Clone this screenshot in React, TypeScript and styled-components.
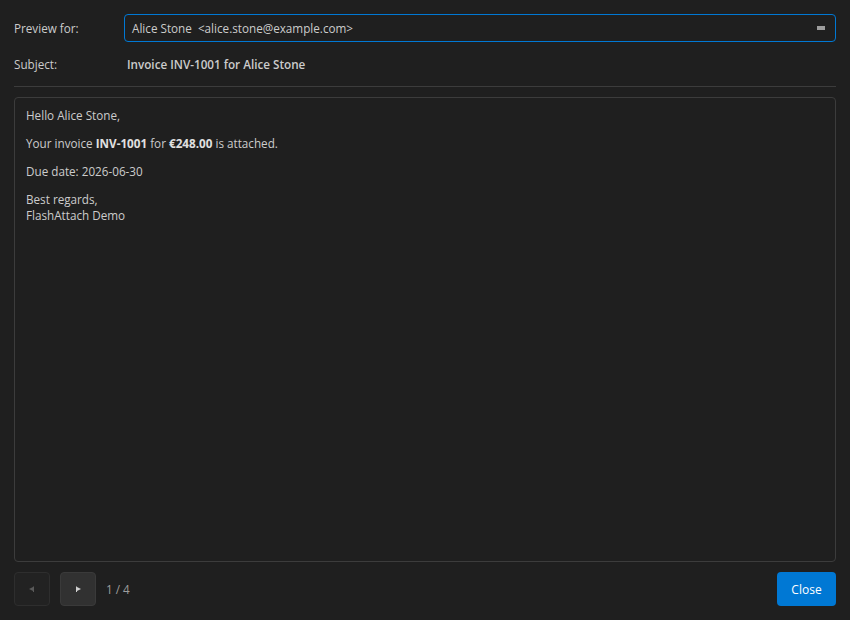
import styled, { createGlobalStyle } from "styled-components";

const GlobalStyle = createGlobalStyle`
  html, body {
    margin: 0;
    padding: 0;
    background: #1f1f1f;
  }
  body {
    font-family: "Open Sans", "Noto Sans", sans-serif;
    font-size: 11.7px;
    color: #cccccc;
  }
`;

const Dialog = styled.div`
  width: 850px;
  height: 620px;
  box-sizing: border-box;
  padding: 14px;
  display: flex;
  flex-direction: column;
`;

const FieldRow = styled.div<{ $gap?: number }>`
  display: grid;
  grid-template-columns: 110px 1fr;
  align-items: center;
  min-height: 28px;
  margin-bottom: ${(p) => p.$gap ?? 0}px;
`;

const Label = styled.span`
  color: #cccccc;
`;

const SelectBox = styled.div`
  height: 28px;
  box-sizing: border-box;
  border: 1px solid #0078d4;
  border-radius: 4px;
  background: #1f1f1f;
  display: flex;
  align-items: center;
  justify-content: space-between;
  padding: 0 10px 0 7px;
  color: #cccccc;
`;

const Caret = styled.span`
  width: 8px;
  height: 4px;
  background: #9d9d9d;
`;

const SubjectText = styled.span`
  font-weight: 600;
  color: #cccccc;
  padding-left: 3px;
`;

const Separator = styled.hr`
  border: none;
  border-top: 1px solid #3c3c3c;
  margin: 8px 0 10px 0;
`;

const Body = styled.div`
  flex: 1;
  border: 1px solid #3c3c3c;
  border-radius: 4px;
  padding: 9px 11px;
  line-height: 16px;
  & p {
    margin: 0 0 12px 0;
  }
  & strong {
    font-weight: 700;
    color: #e0e0e0;
  }
`;

const Footer = styled.div`
  display: flex;
  align-items: center;
  gap: 10px;
  margin-top: 10px;
`;

const NavButton = styled.button<{ $disabled?: boolean }>`
  width: 36px;
  height: 34px;
  border-radius: 4px;
  border: 1px solid ${(p) => (p.$disabled ? "#2e2e2e" : "#3a3a3a")};
  background: ${(p) => (p.$disabled ? "#222222" : "#313131")};
  color: ${(p) => (p.$disabled ? "#5a5a5a" : "#d0d0d0")};
  display: flex;
  align-items: center;
  justify-content: center;
  padding: 0;
`;

const PageInfo = styled.span`
  color: #9d9d9d;
`;

const Spacer = styled.div`
  flex: 1;
`;

const CloseButton = styled.button`
  height: 34px;
  width: 59px;
  border: none;
  border-radius: 4px;
  background: #0078d4;
  color: #ffffff;
  font-family: inherit;
  font-size: 12px;
`;

const Arrow = ({ dir }: { dir: "left" | "right" }) => (
  <svg width="6" height="6" viewBox="0 0 6 6">
    {dir === "left" ? (
      <path d="M5 0 L5 6 L4 6 L4 5 L0 3 L4 1 Z" fill="currentColor" />
    ) : (
      <path d="M1 0 L1 6 L2 6 L2 5 L6 3 L2 1 Z" fill="currentColor" />
    )}
  </svg>
);

const App = () => {
  return (
    <>
      <GlobalStyle />
      <Dialog>
        <FieldRow $gap={8}>
          <Label>Preview for:</Label>
          <SelectBox>
            <span>Alice Stone&nbsp;&nbsp;&lt;alice.stone@example.com&gt;</span>
            <Caret />
          </SelectBox>
        </FieldRow>
        <FieldRow>
          <Label>Subject:</Label>
          <SubjectText>Invoice INV-1001 for Alice Stone</SubjectText>
        </FieldRow>
        <Separator />
        <Body>
          <p>Hello Alice Stone,</p>
          <p>
            Your invoice <strong>INV-1001</strong> for <strong>€248.00</strong> is attached.
          </p>
          <p>Due date: 2026-06-30</p>
          <p>
            Best regards,
            <br />
            FlashAttach Demo
          </p>
        </Body>
        <Footer>
          <NavButton $disabled>
            <Arrow dir="left" />
          </NavButton>
          <NavButton>
            <Arrow dir="right" />
          </NavButton>
          <PageInfo>1 / 4</PageInfo>
          <Spacer />
          <CloseButton>Close</CloseButton>
        </Footer>
      </Dialog>
    </>
  );
};

export default App;
